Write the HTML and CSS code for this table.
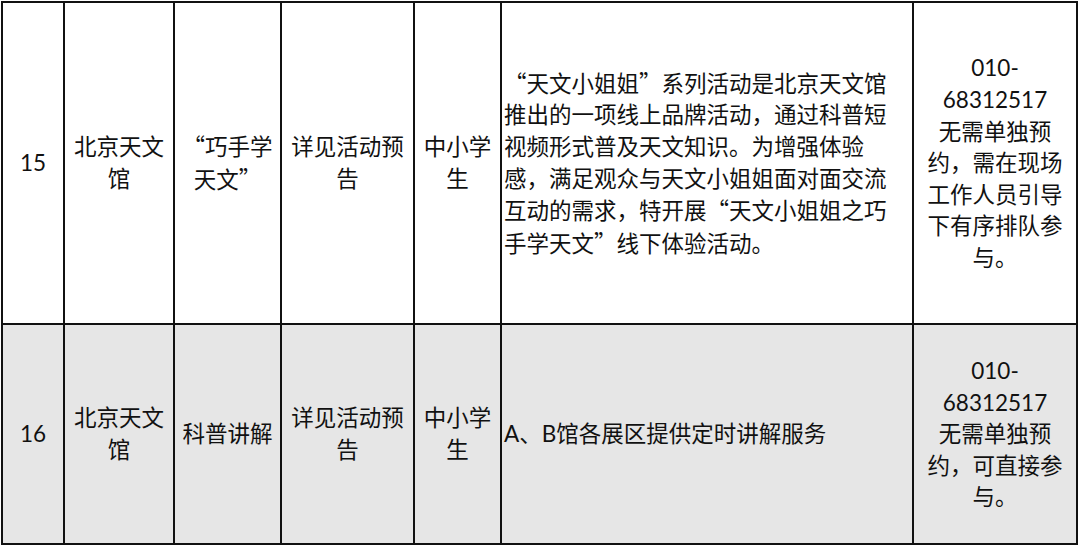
FILE: index.html
```html
<!DOCTYPE html>
<html lang="zh-CN">
<head>
<meta charset="utf-8">
<link rel="stylesheet" href="styles.css">
</head>
<body>
<table class="grid">
  <colgroup>
    <col class="c1"><col class="c2"><col class="c3"><col class="c4"><col class="c5"><col class="c6"><col class="c7">
  </colgroup>
  <tr class="r1">
    <td class="ctr">15</td>
    <td class="ctr">北京天文馆</td>
    <td class="ctr"><span class="q">“</span>巧手学天文<span class="q">”</span></td>
    <td class="ctr">详见活动预告</td>
    <td class="ctr">中小学生</td>
    <td class="desc"><span class="q">“</span>天文小姐姐<span class="q">”</span>系列活动是北京天文馆推出的一项线上品牌活动，通过科普短视频形式普及天文知识。为增强体验感，满足观众与天文小姐姐面对面交流互动的需求，特开展<span class="q">“</span>天文小姐姐之巧手学天文<span class="q">”</span>线下体验活动。</td>
    <td class="ctr contact"><div>010-68312517</div><div>无需单独预约，需在现场工作人员引导下有序排队参与。</div></td>
  </tr>
  <tr class="r2">
    <td class="ctr">16</td>
    <td class="ctr">北京天文馆</td>
    <td class="ctr">科普讲解</td>
    <td class="ctr">详见活动预告</td>
    <td class="ctr">中小学生</td>
    <td class="desc">A、B馆各展区提供定时讲解服务</td>
    <td class="ctr contact"><div>010-68312517</div><div>无需单独预约，可直接参与。</div></td>
  </tr>
</table>
</body>
</html>
```

FILE: styles.css
```css
html, body {
  margin: 0;
  padding: 0;
  background: #ffffff;
}
body {
  padding: 1px;
  font-family: "Lato", "Noto Sans CJK SC", sans-serif;
  font-size: 22.5px;
  line-height: 31.6px;
  color: #111111;
}
.q {
  font-family: "Noto Sans CJK SC", sans-serif;
}
.grid {
  border-collapse: collapse;
  table-layout: fixed;
  width: 1077px;
}
.c1 { width: 62px; }
.c2 { width: 110px; }
.c3 { width: 107px; }
.c4 { width: 133px; }
.c5 { width: 87px; }
.c6 { width: 412px; }
.c7 { width: 164px; }
.grid td {
  border: 2px solid #111111;
  padding: 0;
  vertical-align: middle;
  word-break: normal;
}
.r1 td { height: 320px; background: #ffffff; }
.r2 td { height: 218px; background: #e6e6e6; }
.ctr { text-align: center; }
.desc {
  text-align: left;
  padding: 0 14px 0 2px !important;
}
.contact {
  padding: 0 9px !important;
}
```
